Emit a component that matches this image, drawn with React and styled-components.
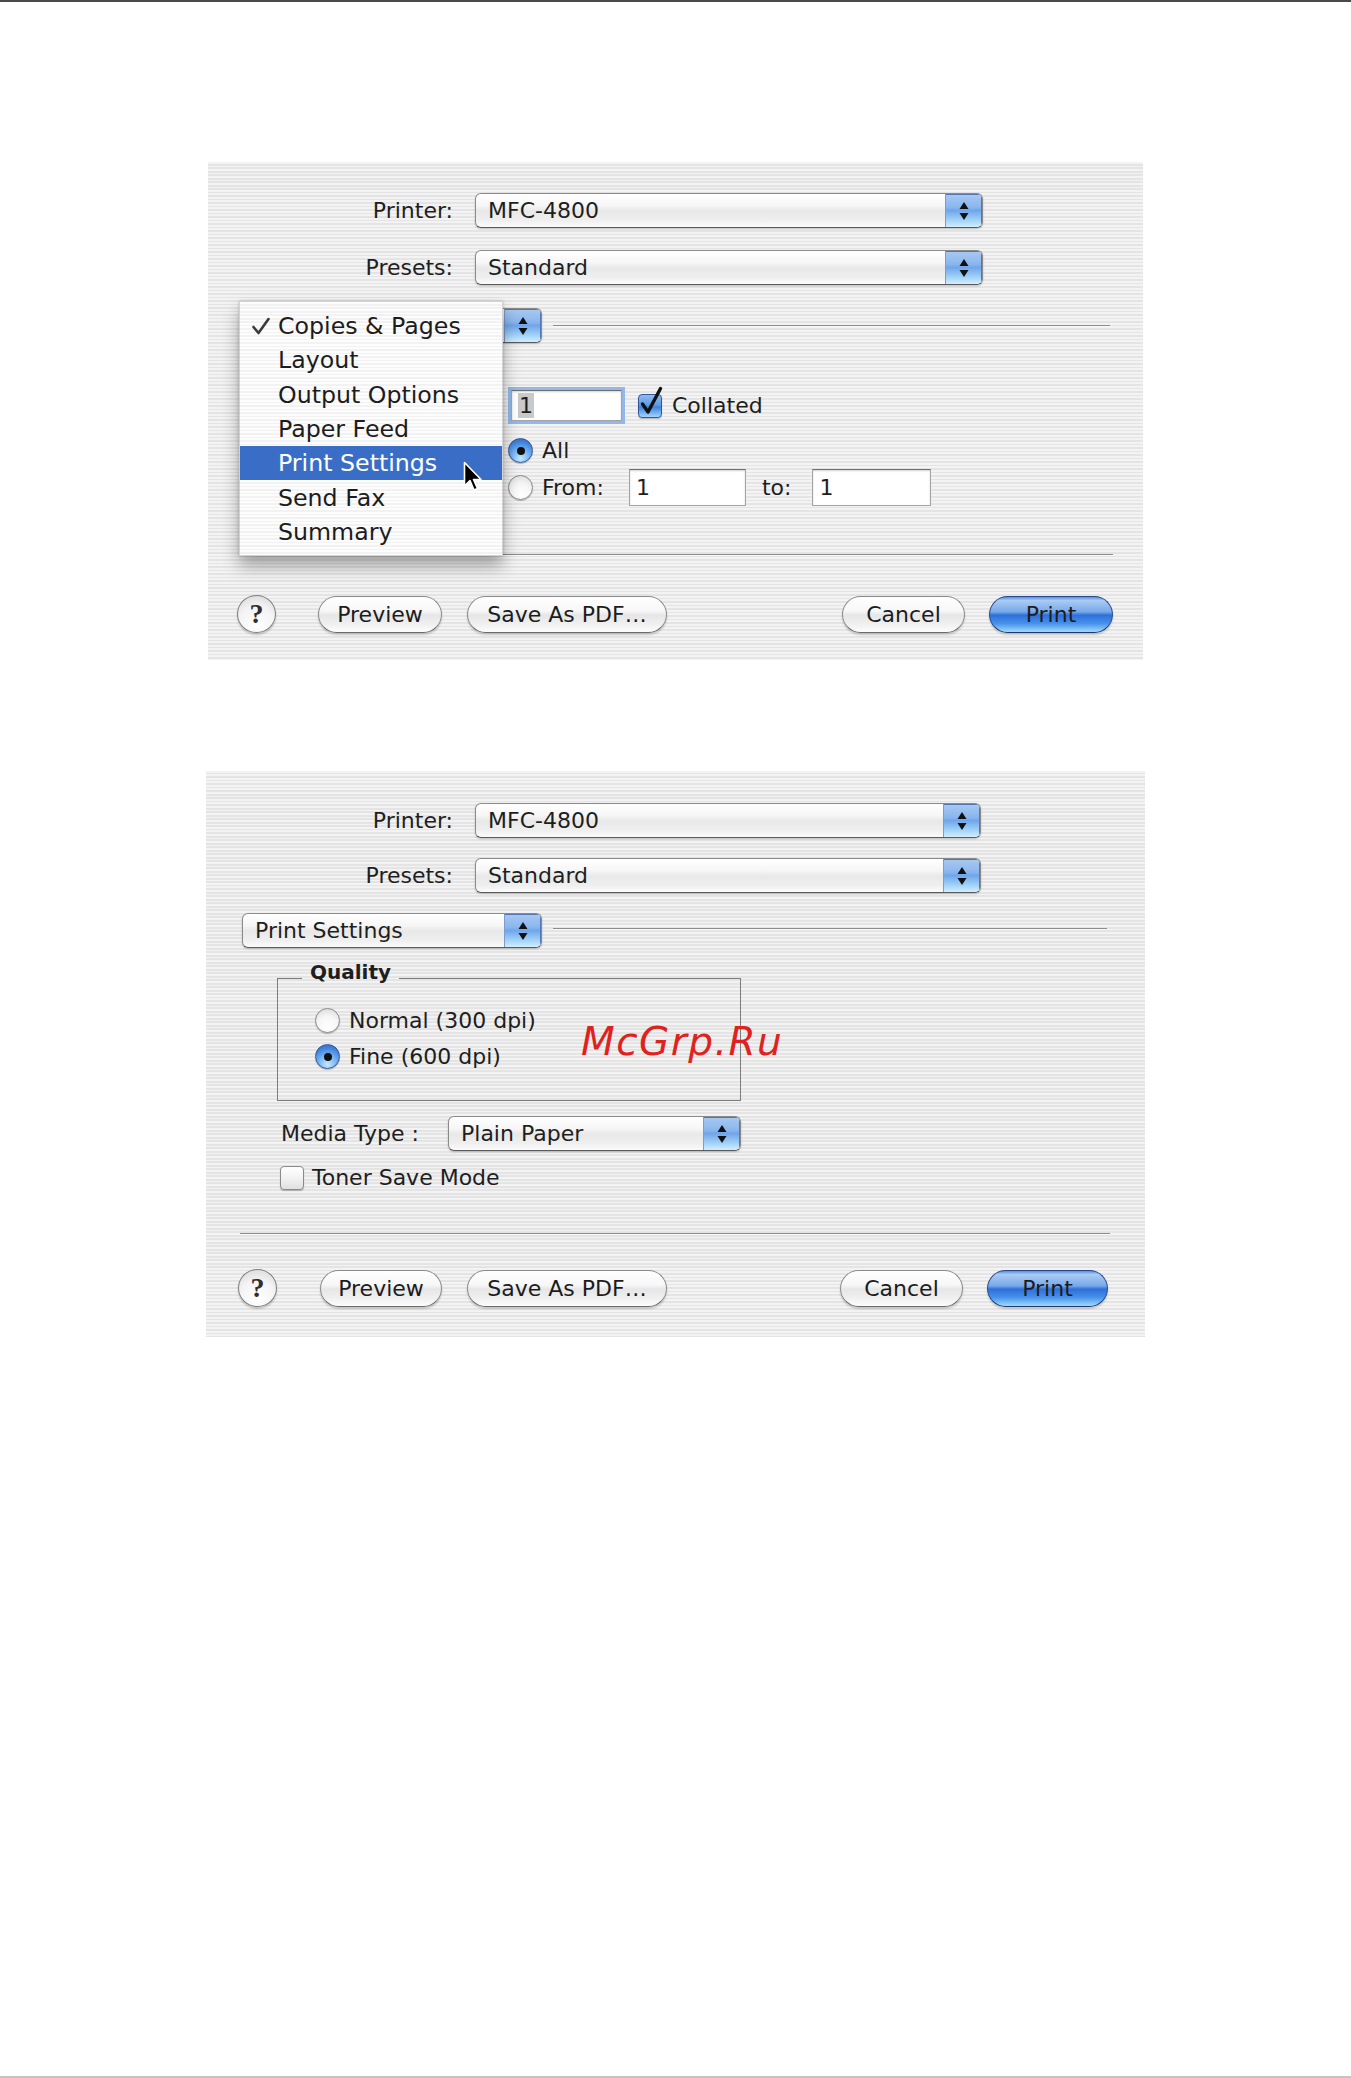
import React from 'react';
import styled, { createGlobalStyle } from 'styled-components';

const GlobalStyle = createGlobalStyle`
  html, body { margin: 0; padding: 0; background: #fff; }
  body {
    font-family: "DejaVu Sans", "Liberation Sans", sans-serif;
    color: #1e1e1e;
  }
`;

const stripes = `repeating-linear-gradient(to bottom, #f3f3f3 0px, #f3f3f3 1.75px, #e4e4e4 1.75px, #e4e4e4 3.5px)`;

const Page = styled.div`
  width: 1351px;
  height: 2078px;
  box-sizing: border-box;
  border-top: 2px solid #4a4a4a;
  border-bottom: 2px solid #c4c4c4;
  display: flex;
  flex-direction: column;
  overflow: hidden;
`;

const Dialog = styled.div`
  position: relative;
  box-sizing: border-box;
  flex: none;
  margin-left: ${p => p.$left}px;
  margin-top: ${p => p.$top}px;
  width: ${p => p.$width}px;
  height: ${p => p.$height}px;
  padding-top: ${p => p.$padTop}px;
  background: ${stripes};
  display: flex;
  flex-direction: column;
  font-size: 22px;
`;

const FieldRow = styled.div`
  display: grid;
  grid-template-columns: ${p => p.$labelW}px ${p => p.$popW}px;
  column-gap: 22px;
  align-items: center;
  margin-bottom: ${p => p.$gap || 0}px;
`;

const Label = styled.span`
  text-align: right;
  white-space: nowrap;
`;

const Popup = styled.div`
  box-sizing: border-box;
  display: flex;
  align-items: center;
  width: ${p => p.$w}px;
  height: 35px;
  flex: none;
  border: 1px solid #8a8a8a;
  border-bottom-color: #5a5a5a;
  border-radius: 6px;
  background: linear-gradient(to bottom, #ffffff 0%, #f6f6f6 35%, #e8e8e8 52%, #efefef 80%, #fbfbfb 100%);
  box-shadow: 0 1px 2px rgba(0, 0, 0, 0.22);
  overflow: hidden;
`;

const PopupText = styled.span`
  flex: 1;
  padding-left: 12px;
  white-space: nowrap;
`;

const Stepper = styled.span`
  width: 36px;
  align-self: stretch;
  display: flex;
  align-items: center;
  justify-content: center;
  border-left: 1px solid #7d9ccc;
  box-shadow: inset 0 1px 0 #5476b4, inset -1px 0 0 #5476b4;
  background: linear-gradient(to bottom, #a9c9f2 0%, #8ab6ee 40%, #6fa6ea 50%, #9fd0f8 78%, #d2eeff 100%);
`;

const PanelRow = styled.div`
  display: flex;
  align-items: center;
  padding-left: ${p => p.$left}px;
  padding-right: ${p => p.$right}px;
`;

const Rule = styled.div`
  height: 0;
  border-top: 1px solid #8c8c8c;
  border-bottom: 1px solid #fafafa;
  flex: ${p => (p.$grow ? 1 : 'none')};
  margin: ${p => p.$m || '0'};
`;

const Block = styled.div`
  display: flex;
  flex-direction: column;
  margin-top: ${p => p.$mt}px;
`;

const OptionRow = styled.div`
  display: flex;
  align-items: center;
  margin-top: ${p => p.$mt || 0}px;
  margin-left: ${p => p.$ml || 0}px;
  white-space: nowrap;
`;

const TextField = styled.div`
  box-sizing: border-box;
  width: ${p => p.$w}px;
  height: ${p => p.$h}px;
  margin-left: ${p => p.$ml || 0}px;
  flex: none;
  display: flex;
  align-items: center;
  padding-left: 6px;
  background: #fff;
  border: 1px solid #a4a4a4;
  border-top-color: #707070;
  box-shadow: inset 0 1px 2px rgba(0, 0, 0, 0.18)${p => (p.$focus ? ', 0 0 0 3px #93b8e8' : '')};
`;

const Selected = styled.span`
  background: #c9c9c9;
  padding: 0 1px;
`;

const Radio = styled.span`
  box-sizing: border-box;
  width: 25px;
  height: 25px;
  flex: none;
  border-radius: 50%;
  display: inline-flex;
  align-items: center;
  justify-content: center;
  border: 1px solid ${p => (p.$on ? '#34569a' : '#8a8a8a')};
  background: ${p =>
    p.$on
      ? 'radial-gradient(circle at 50% 85%, #c6eaff 0%, #76b4f3 40%, #4284dd 72%, #2d62bb 100%)'
      : 'radial-gradient(circle at 50% 80%, #ffffff 0%, #f6f6f6 50%, #d6d6d6 100%)'};
  box-shadow: 0 1px 1px rgba(0, 0, 0, 0.25);
  &::after {
    content: '';
    display: ${p => (p.$on ? 'block' : 'none')};
    width: 8px;
    height: 8px;
    border-radius: 50%;
    background: #111;
  }
`;

const CheckBox = styled.span`
  box-sizing: border-box;
  position: relative;
  width: 24px;
  height: 24px;
  flex: none;
  margin-left: ${p => p.$ml || 0}px;
  border-radius: 4px;
  border: 1px solid ${p => (p.$on ? '#34569a' : '#8a8a8a')};
  background: ${p =>
    p.$on
      ? 'linear-gradient(to bottom, #8fbcf0 0%, #5d9ae6 45%, #3f82dd 55%, #9fd6ff 100%)'
      : 'linear-gradient(to bottom, #ffffff 0%, #f2f2f2 50%, #e0e0e0 100%)'};
  box-shadow: 0 1px 1px rgba(0, 0, 0, 0.25);
  svg { position: absolute; left: 1px; top: -8px; overflow: visible; }
`;

const Text = styled.span`
  margin-left: ${p => p.$ml || 0}px;
  white-space: nowrap;
`;

const ButtonBar = styled.div`
  display: flex;
  align-items: center;
  padding: 0 ${p => p.$right}px 0 ${p => p.$left}px;
  margin-top: ${p => p.$mt}px;
`;

const Spacer = styled.div`
  flex: 1;
`;

const HelpButton = styled.div`
  box-sizing: border-box;
  width: 39px;
  height: 38px;
  flex: none;
  border-radius: 50%;
  border: 1px solid #7e7e7e;
  background: radial-gradient(circle at 50% 80%, #ffffff 0%, #f3f3f3 55%, #d4d4d4 100%);
  box-shadow: 0 2px 2px rgba(0, 0, 0, 0.2);
  display: flex;
  align-items: center;
  justify-content: center;
  font-family: "Liberation Serif", "DejaVu Serif", serif;
  font-weight: bold;
  font-size: 28px;
  color: #2e2e2e;
`;

const PushButton = styled.div`
  box-sizing: border-box;
  width: ${p => p.$w}px;
  height: 37px;
  flex: none;
  margin-left: ${p => p.$ml || 0}px;
  border-radius: 19px;
  display: flex;
  align-items: center;
  justify-content: center;
  white-space: nowrap;
  color: #1c1c1c;
  border: 1px solid ${p => (p.$primary ? '#27498e' : '#8a8a8a')};
  border-bottom-color: ${p => (p.$primary ? '#1d3670' : '#6a6a6a')};
  background: ${p =>
    p.$primary
      ? 'linear-gradient(to bottom, #5a8fdc 0%, #aacbf3 10%, #78a9ea 42%, #2f70d8 52%, #4590ea 75%, #9edbff 100%)'
      : 'linear-gradient(to bottom, #ffffff 0%, #f7f7f7 40%, #e6e6e6 52%, #f1f1f1 80%, #fdfdfd 100%)'};
  box-shadow: 0 2px 2px rgba(0, 0, 0, 0.18);
`;

const Menu = styled.div`
  position: absolute;
  left: ${p => p.$x}px;
  top: ${p => p.$y}px;
  width: 264px;
  box-sizing: border-box;
  padding: 7px 0 6px;
  background: repeating-linear-gradient(to bottom, #fdfdfd 0px, #fdfdfd 1.75px, #f2f2f2 1.75px, #f2f2f2 3.5px);
  border: 1px solid #d2d2d2;
  box-shadow: 0 10px 16px rgba(0, 0, 0, 0.33), 0 0 3px rgba(0, 0, 0, 0.18);
  font-size: 23.7px;
  z-index: 2;
`;

const MenuItem = styled.div`
  display: flex;
  align-items: center;
  height: 34.3px;
  white-space: nowrap;
  color: ${p => (p.$active ? '#fff' : '#1c1c1c')};
  background: ${p => (p.$active ? '#3a6ec6' : 'transparent')};
`;

const CheckCol = styled.span`
  width: 38px;
  box-sizing: border-box;
  padding-left: 12px;
  display: flex;
  align-items: center;
  flex: none;
`;

const Cursor = styled.svg`
  position: absolute;
  left: 223px;
  top: 159px;
`;

const Quality = styled.fieldset`
  box-sizing: border-box;
  width: 464px;
  min-width: 0;
  margin: 12px 0 0 71px;
  padding: 12px 0 31px 24px;
  border: 1px solid #7c7c7c;
`;

const Legend = styled.legend`
  padding: 0 8px 12px;
  font-weight: bold;
  font-size: 20px;
  line-height: 24px;
`;

const MediaLabel = styled.span`
  width: 167px;
  flex: none;
`;

const Watermark = styled.div`
  position: absolute;
  left: 375px;
  top: 251px;
  font-family: "DejaVu Sans", sans-serif;
  font-style: italic;
  font-size: 39px;
  line-height: 1;
  letter-spacing: 1.5px;
  color: #e0221e;
`;

const Arrows = () => (
  <svg width="10" height="20" viewBox="0 0 10 20">
    <path d="M5 1 L9.5 8 L0.5 8 Z" fill="#111" />
    <path d="M0.5 12 L9.5 12 L5 19 Z" fill="#111" />
  </svg>
);

const Select = ({ w, children }) => (
  <Popup $w={w}>
    <PopupText>{children}</PopupText>
    <Stepper><Arrows /></Stepper>
  </Popup>
);

const Tick = () => (
  <svg width="22" height="28" viewBox="0 0 22 28">
    <path d="M2.5 17 L8 25 L20.5 1.5" fill="none" stroke="#111" strokeWidth="3.4" strokeLinejoin="round" strokeLinecap="round" />
  </svg>
);

const MenuTick = () => (
  <svg width="18" height="18" viewBox="0 0 18 18">
    <path d="M1.5 10 L6.5 16 L16.5 2" fill="none" stroke="#3a3a3a" strokeWidth="2.6" strokeLinejoin="round" strokeLinecap="round" />
  </svg>
);

const menuItems = ['Copies & Pages', 'Layout', 'Output Options', 'Paper Feed', 'Print Settings', 'Send Fax', 'Summary'];

const Buttons = ({ left, right, mt, widths }) => (
  <ButtonBar $left={left} $right={right} $mt={mt}>
    <HelpButton>?</HelpButton>
    <PushButton $w={widths[0]} $ml={widths[4]}>Preview</PushButton>
    <PushButton $w={widths[1]} $ml={25}>Save As PDF…</PushButton>
    <Spacer />
    <PushButton $w={widths[2]}>Cancel</PushButton>
    <PushButton $w={widths[3]} $ml={24} $primary>Print</PushButton>
  </ButtonBar>
);

const CopiesDialog = () => (
  <Dialog $left={208} $top={160} $width={935} $height={498} $padTop={31}>
    <FieldRow $labelW={245} $popW={508} $gap={22}>
      <Label>Printer:</Label>
      <Select w={508}>MFC-4800</Select>
    </FieldRow>
    <FieldRow $labelW={245} $popW={508} $gap={23}>
      <Label>Presets:</Label>
      <Select w={508}>Standard</Select>
    </FieldRow>
    {/* panel popup sits under the open menu, only its stepper shows */}
    <PanelRow $left={34} $right={33}>
      <Select w={300} />
      <Rule $grow $m="0 0 0 11px" />
    </PanelRow>

    <Block $mt={47}>
      <OptionRow $ml={300}>
        <TextField $w={111} $h={31} $ml={3} $focus><Selected>1</Selected></TextField>
        <CheckBox $on $ml={16}><Tick /></CheckBox>
        <Text $ml={10}>Collated</Text>
      </OptionRow>
      <OptionRow $mt={17} $ml={300}>
        <Radio $on />
        <Text $ml={9}>All</Text>
      </OptionRow>
      <OptionRow $mt={6} $ml={300}>
        <Radio />
        <Text $ml={9}>From:</Text>
        <TextField $w={117} $h={37} $ml={25}>1</TextField>
        <Text $ml={16}>to:</Text>
        <TextField $w={119} $h={37} $ml={21}>1</TextField>
      </OptionRow>
    </Block>

    <Rule $m="48px 30px 0 31px" />
    <Buttons left={29} right={30} mt={39} widths={[124, 200, 123, 124, 42]} />

    <Menu $x={31} $y={139}>
      {menuItems.map((item, i) => (
        <MenuItem key={item} $active={item === 'Print Settings'}>
          <CheckCol>{i === 0 && <MenuTick />}</CheckCol>
          {item}
        </MenuItem>
      ))}
      <Cursor width="20" height="32" viewBox="0 0 20 32">
        <path d="M1.5 1.5 L1.5 25 L7 19.5 L11 29 L14.5 27.5 L10.5 18.5 L18 18.5 Z" fill="#000" stroke="#fff" strokeWidth="1.6" strokeLinejoin="round" />
      </Cursor>
    </Menu>
  </Dialog>
);

const SettingsDialog = () => (
  <Dialog $left={206} $top={111} $width={939} $height={566} $padTop={32}>
    <FieldRow $labelW={247} $popW={506} $gap={20}>
      <Label>Printer:</Label>
      <Select w={506}>MFC-4800</Select>
    </FieldRow>
    <FieldRow $labelW={247} $popW={506} $gap={20}>
      <Label>Presets:</Label>
      <Select w={506}>Standard</Select>
    </FieldRow>
    <PanelRow $left={36} $right={38}>
      <Select w={300}>Print Settings</Select>
      <Rule $grow $m="-4px 0 0 11px" />
    </PanelRow>

    <Quality>
      <Legend>Quality</Legend>
      <OptionRow $ml={13}>
        <Radio />
        <Text $ml={9}>Normal (300 dpi)</Text>
      </OptionRow>
      <OptionRow $ml={13} $mt={11}>
        <Radio $on />
        <Text $ml={9}>Fine (600 dpi)</Text>
      </OptionRow>
    </Quality>

    <OptionRow $ml={75} $mt={15}>
      <MediaLabel>Media Type :</MediaLabel>
      <Select w={293}>Plain Paper</Select>
    </OptionRow>
    <OptionRow $ml={74} $mt={14}>
      <CheckBox />
      <Text $ml={8}>Toner Save Mode</Text>
    </OptionRow>

    <Rule $m="43px 35px 0 34px" />
    <Buttons left={32} right={37} mt={34} widths={[122, 200, 123, 121, 43]} />

    <Watermark>McGrp.Ru</Watermark>
  </Dialog>
);

export default function App() {
  return (
    <>
      <GlobalStyle />
      <Page>
        <CopiesDialog />
        <SettingsDialog />
      </Page>
    </>
  );
}
